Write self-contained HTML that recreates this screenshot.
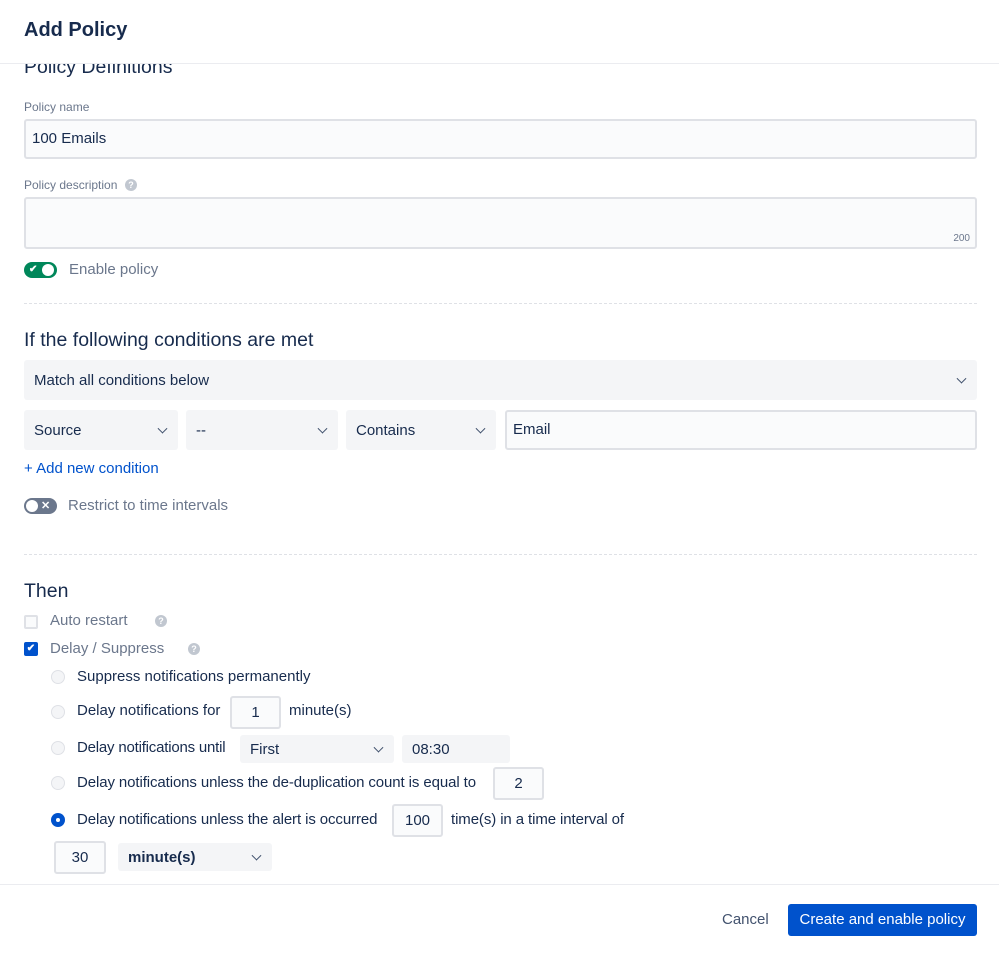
<!DOCTYPE html>
<html><head><style>
*{box-sizing:border-box;margin:0;padding:0}
body{width:999px;height:954px;position:relative;overflow:hidden;background:#fff;font-family:"Liberation Sans",sans-serif;color:#172b4d}
.a{position:absolute;white-space:nowrap}
.lbl{font-size:12px;color:#6b778c}
.inp{position:absolute;background:#fafbfc;border:2px solid #dfe1e6;border-radius:3px;font-size:15px}
.sel{position:absolute;background:#f4f5f7;border-radius:3px;font-size:15px;padding-left:10px;display:flex;align-items:center}
.chev{position:absolute;right:12px;top:50%;width:7px;height:7px;border-right:1.5px solid #42526e;border-bottom:1.5px solid #42526e;transform:translateY(-70%) rotate(45deg)}
.help{position:absolute;width:12px;height:12px;border-radius:50%;background:#c1c7d0;color:#fff;font-size:9px;font-weight:bold;text-align:center;line-height:12px}
.radio{position:absolute;width:14px;height:14px;border-radius:50%;background:#f4f5f7;border:1.5px solid #dfe1e6}
.dash{position:absolute;left:24px;width:953px;border-top:1px dashed #dfe1e6}
.t14{font-size:15px}
.h{font-size:19.5px}
.num{position:absolute;background:#fafbfc;border:2px solid #dfe1e6;border-radius:3px;font-size:15px;text-align:center}
</style></head><body>
<div class="a" style="left:0;top:64px;width:999px;height:820px;overflow:hidden">
 <div class="a h" style="left:24px;top:-8px">Policy Definitions</div>
</div>
<div class="a" style="left:0;top:0;width:999px;height:64px;background:#fff;border-bottom:1px solid #ebecf0"></div>
<div class="a" style="left:24px;top:19px;font-size:20px;font-weight:bold">Add Policy</div>

<div class="a lbl" style="left:24px;top:100px">Policy name</div>
<div class="inp" style="left:24px;top:119px;width:953px;height:40px;padding:9px 6px">100 Emails</div>
<div class="a lbl" style="left:24px;top:178px">Policy description</div>
<div class="help" style="left:125px;top:179px">?</div>
<div class="inp" style="left:24px;top:197px;width:953px;height:52px"><span class="a" style="right:5px;bottom:3px;font-size:10px;color:#6b778c">200</span></div>
<div class="a" style="left:24px;top:262px;width:33px;height:16px;border-radius:8px;background:#00875a"></div>
<div class="a" style="left:42px;top:264px;width:12px;height:12px;border-radius:50%;background:#fff"></div>
<div class="a" style="left:29px;top:263px;color:#fff;font-size:10px;font-weight:bold;line-height:14px">✔</div>
<div class="a t14" style="left:69px;top:261px;color:#6b778c">Enable policy</div>
<div class="dash" style="top:303px"></div>

<div class="a h" style="left:24px;top:329px">If the following conditions are met</div>
<div class="sel" style="left:24px;top:360px;width:953px;height:40px">Match all conditions below<i class="chev"></i></div>
<div class="sel" style="left:24px;top:410px;width:154px;height:40px">Source<i class="chev"></i></div>
<div class="sel" style="left:186px;top:410px;width:152px;height:40px">--<i class="chev"></i></div>
<div class="sel" style="left:346px;top:410px;width:150px;height:40px">Contains<i class="chev"></i></div>
<div class="inp" style="left:505px;top:410px;width:472px;height:40px;padding:9px 6px">Email</div>
<div class="a t14" style="left:24px;top:460px;color:#0052cc">+ Add new condition</div>
<div class="a" style="left:24px;top:498px;width:33px;height:16px;border-radius:8px;background:#6b778c"></div>
<div class="a" style="left:26px;top:500px;width:12px;height:12px;border-radius:50%;background:#fff"></div>
<div class="a" style="left:41px;top:499px;color:#fff;font-size:11px;font-weight:bold;line-height:14px">✕</div>
<div class="a t14" style="left:68px;top:497px;color:#6b778c">Restrict to time intervals</div>
<div class="dash" style="top:554px"></div>

<div class="a h" style="left:24px;top:580px">Then</div>
<div class="a" style="left:24px;top:615px;width:14px;height:14px;border:2px solid #dfe1e6;border-radius:2px;background:#fafbfc"></div>
<div class="a t14" style="left:50px;top:612px;color:#6b778c">Auto restart</div>
<div class="help" style="left:155px;top:615px">?</div>
<div class="a" style="left:24px;top:642px;width:14px;height:14px;border-radius:2px;background:#0052cc;color:#fff;font-size:10px;text-align:center;line-height:14px;font-weight:bold">✔</div>
<div class="a t14" style="left:50px;top:640px;color:#6b778c">Delay / Suppress</div>
<div class="help" style="left:188px;top:643px">?</div>

<div class="radio" style="left:51px;top:670px"></div>
<div class="a t14" style="left:77px;top:668px">Suppress notifications permanently</div>
<div class="radio" style="left:51px;top:705px"></div>
<div class="a t14" style="left:77px;top:702px">Delay notifications for</div>
<div class="num" style="left:230px;top:696px;width:51px;height:33px;line-height:29px">1</div>
<div class="a t14" style="left:289px;top:702px">minute(s)</div>
<div class="radio" style="left:51px;top:741px"></div>
<div class="a t14" style="left:77px;top:739px;letter-spacing:-0.2px">Delay notifications until</div>
<div class="sel" style="left:240px;top:735px;width:154px;height:28px">First<i class="chev"></i></div>
<div class="sel" style="left:402px;top:735px;width:108px;height:28px">08:30</div>
<div class="radio" style="left:51px;top:776px"></div>
<div class="a t14" style="left:77px;top:774px;letter-spacing:-0.1px">Delay notifications unless the de-duplication count is equal to</div>
<div class="num" style="left:493px;top:767px;width:51px;height:33px;line-height:29px">2</div>
<div class="a" style="left:51px;top:813px;width:14px;height:14px;border-radius:50%;background:#0052cc"></div>
<div class="a" style="left:56px;top:818px;width:4px;height:4px;border-radius:50%;background:#fff"></div>
<div class="a t14" style="left:77px;top:811px;letter-spacing:-0.1px">Delay notifications unless the alert is occurred</div>
<div class="num" style="left:392px;top:804px;width:51px;height:33px;line-height:29px">100</div>
<div class="a t14" style="left:451px;top:811px;letter-spacing:-0.1px">time(s) in a time interval of</div>
<div class="num" style="left:54px;top:841px;width:52px;height:33px;line-height:29px">30</div>
<div class="sel" style="left:118px;top:843px;width:154px;height:28px;font-weight:bold">minute(s)<i class="chev"></i></div>

<div class="a" style="left:0;top:884px;width:999px;border-top:1px solid #ebecf0"></div>
<div class="a t14" style="left:722px;top:911px;color:#42526e">Cancel</div>
<div class="a t14" style="left:788px;top:904px;width:189px;height:32px;background:#0052cc;color:#fff;border-radius:3px;text-align:center;line-height:32px">Create and enable policy</div>
</body></html>
